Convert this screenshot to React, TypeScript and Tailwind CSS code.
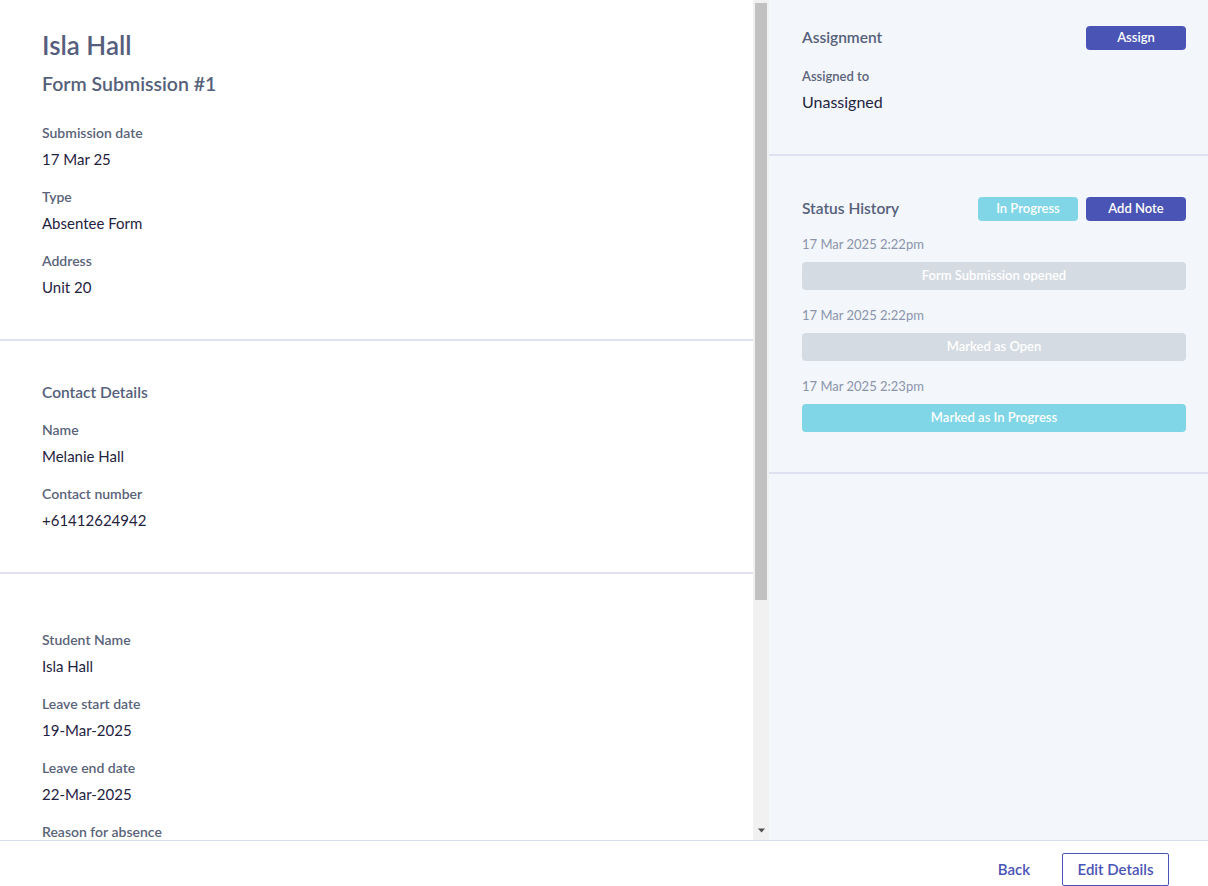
import React from "react";

const font = { fontFamily: "Lato, 'Noto Sans', sans-serif" };

function Field({ label, value, last }: { label: string; value?: string; last?: boolean }) {
  return (
    <div className={last ? "" : "mb-[18px]"}>
      <div className="text-[14px] font-semibold text-[#5a6379] leading-[20px]">{label}</div>
      {value !== undefined && (
        <div className="mt-[6px] text-[15px] text-[#1f2340] leading-[20px]">{value}</div>
      )}
    </div>
  );
}

function StatusEntry({ time, text, active }: { time: string; text: string; active?: boolean }) {
  return (
    <div className="mb-[16px]">
      <div className="text-[13px] text-[#8a94ab] leading-[18px]">{time}</div>
      <div
        className={
          "mt-[9px] h-[28px] rounded-[4px] flex items-center justify-center text-[13px] font-semibold text-white " +
          (active ? "bg-[#80d6e6]" : "bg-[#d5dbe2]")
        }
      >
        {text}
      </div>
    </div>
  );
}

export default function App() {
  return (
    <div className="h-[886px] w-[1208px] flex flex-col bg-white" style={font}>
      <div className="flex flex-1 min-h-0">
        <div className="w-[753px] shrink-0 overflow-hidden bg-white">
          <div className="px-[42px] pt-[29px] pb-[42px] border-b-2 border-[#dfe1f0]">
            <h1 className="text-[26px] font-semibold text-[#565e7e] leading-[32px]">Isla Hall</h1>
            <h2 className="mt-[10px] text-[19.5px] font-semibold text-[#55607a] leading-[26px]">Form Submission #1</h2>
            <div className="mt-[26px]">
              <Field label="Submission date" value="17 Mar 25" />
              <Field label="Type" value="Absentee Form" />
              <Field label="Address" value="Unit 20" last />
            </div>
          </div>
          <div className="px-[42px] pt-[40px] pb-[42px] border-b-2 border-[#dfe1f0]">
            <h3 className="text-[15.5px] font-semibold text-[#55607a] leading-[22px] mb-[17px]">Contact Details</h3>
            <Field label="Name" value="Melanie Hall" />
            <Field label="Contact number" value="+61412624942" last />
          </div>
          <div className="px-[42px] pt-[56px]">
            <Field label="Student Name" value="Isla Hall" />
            <Field label="Leave start date" value="19-Mar-2025" />
            <Field label="Leave end date" value="22-Mar-2025" />
            <Field label="Reason for absence" last />
          </div>
        </div>
        <div className="w-[16px] shrink-0 bg-[#f1f1f1] flex flex-col pt-[3px] pb-[6px]">
          <div className="mx-[2px] h-[597px] bg-[#c1c1c1]" />
          <div className="flex-1" />
          <svg width="16" height="6" viewBox="0 0 16 6" className="block">
            <path d="M5 0.5 H12 L8.5 4.5 Z" fill="#505050" />
          </svg>
        </div>
        <div className="flex-1 bg-[#f3f6fa]">
          <div className="pl-[33px] pr-[22px] pt-[26px] pb-[41px] border-b-2 border-[#dfe1f0]">
            <div className="flex items-center justify-between">
              <div className="text-[15.5px] font-semibold text-[#55607a]">Assignment</div>
              <button className="w-[100px] h-[24px] rounded-[4px] bg-[#4a54b5] text-white text-[13px] font-semibold">Assign</button>
            </div>
            <div className="mt-[17px] text-[13px] font-semibold text-[#5a6379] leading-[18px]">Assigned to</div>
            <div className="mt-[6px] text-[16px] text-[#1f2340] leading-[22px]">Unassigned</div>
          </div>
          <div className="pl-[33px] pr-[22px] pt-[41px] pb-[24px] border-b-2 border-[#dfe1f0]">
            <div className="flex items-center justify-between mb-[14px]">
              <div className="text-[15.5px] font-semibold text-[#55607a]">Status History</div>
              <div className="flex gap-[8px]">
                <button className="w-[100px] h-[24px] rounded-[4px] bg-[#80d6e6] text-white text-[13px] font-semibold">In Progress</button>
                <button className="w-[100px] h-[24px] rounded-[4px] bg-[#4a54b5] text-white text-[13px] font-semibold">Add Note</button>
              </div>
            </div>
            <StatusEntry time="17 Mar 2025 2:22pm" text="Form Submission opened" />
            <StatusEntry time="17 Mar 2025 2:22pm" text="Marked as Open" />
            <StatusEntry time="17 Mar 2025 2:23pm" text="Marked as In Progress" active />
          </div>
        </div>
      </div>
      <div className="h-[46px] shrink-0 border-t border-[#d8dcef] bg-white flex items-start justify-end pr-[39px] pt-[12px]">
        <button className="h-[33px] text-[15px] font-semibold text-[#4a54b5] mr-[32px]">Back</button>
        <button className="w-[107px] h-[33px] border border-[#4a54b5] rounded-[2px] text-[15px] font-semibold text-[#4a54b5]">Edit Details</button>
      </div>
    </div>
  );
}
